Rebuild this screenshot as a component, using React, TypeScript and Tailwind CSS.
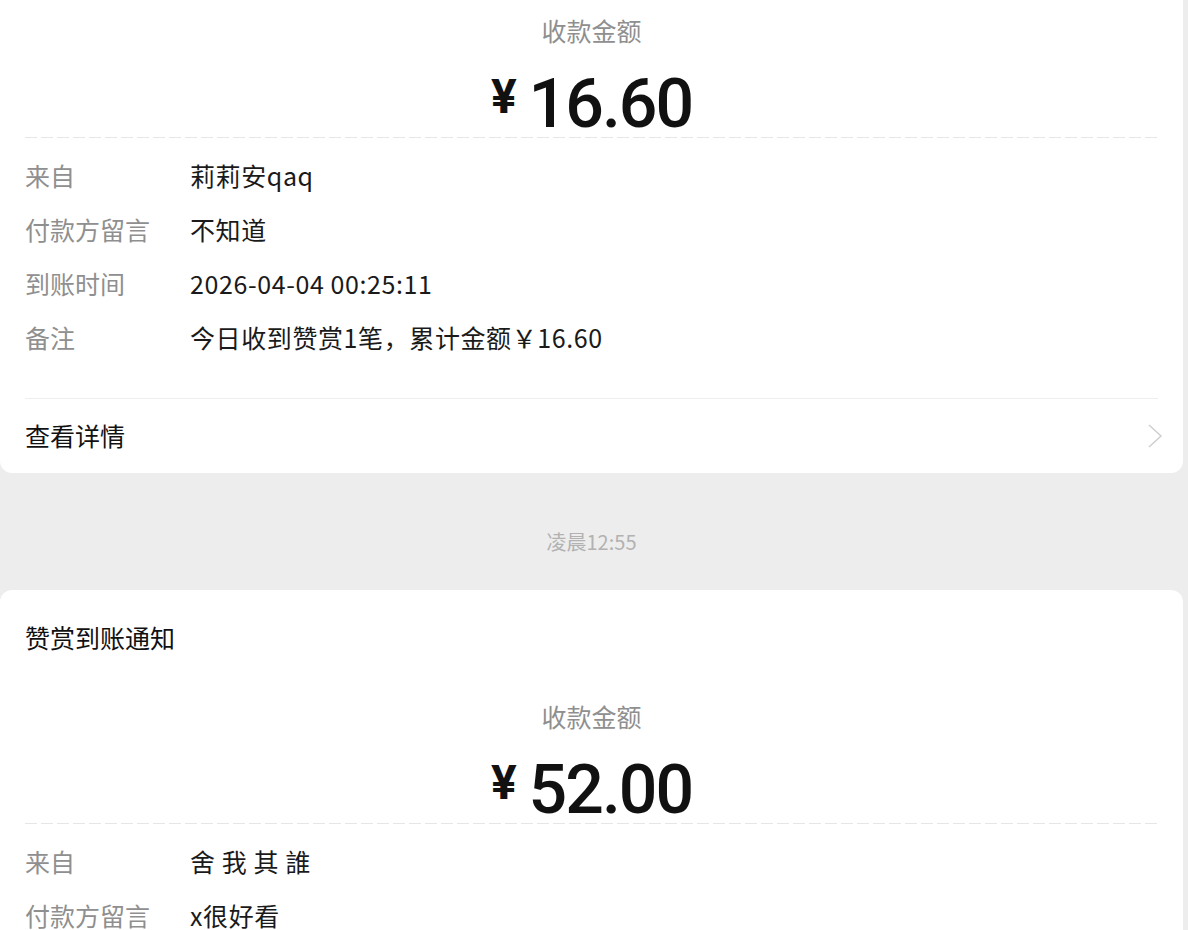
const cjk = "font-['Noto_Sans_CJK_SC',sans-serif]";

type Row = { label: string; value: string };

const DashedLine = () => (
  <div className="h-px w-full bg-[repeating-linear-gradient(90deg,#e6e6e6_0_12px,transparent_12px_16px)]" />
);

const Amount = ({ value }: { value: string }) => (
  <div className="mt-[24px] flex h-[67px] items-start justify-center">
    <span className="mt-[3px] mr-[12px] font-['Roboto',sans-serif] text-[48px] font-bold leading-[48px] text-[#111]">
      ¥
    </span>
    <span className="font-['Roboto',sans-serif] text-[68px] font-medium leading-[68px] tracking-[-2px] text-[#111]">
      {value}
    </span>
  </div>
);

const InfoRows = ({ rows }: { rows: Row[] }) => (
  <div className="mt-[11px]">
    {rows.map((r) => (
      <div key={r.label} className="flex h-[54px] items-center text-[25px]">
        <div className="w-[165px] shrink-0 text-[#8f8f8f]">{r.label}</div>
        <div className="tracking-[0.6px] text-[#1a1a1a]">{r.value}</div>
      </div>
    ))}
  </div>
);

const Chevron = () => (
  <svg width="16" height="24" viewBox="0 0 16 24" className="mr-[-5px]">
    <polyline points="2,1 14,12 2,23" fill="none" stroke="#cfcfcf" strokeWidth="1.5" />
  </svg>
);

export default function App() {
  return (
    <div className={`${cjk} h-[930px] w-[1188px] overflow-hidden bg-[#ededed]`}>
      {/* first notice, top part scrolled off screen */}
      <div className="w-[1183px] rounded-b-[12px] bg-white px-[25px]">
        <div className="pt-[14px] text-center text-[25px] leading-[32px] text-[#8f8f8f]">收款金额</div>
        <Amount value="16.60" />
        <DashedLine />
        <InfoRows
          rows={[
            { label: "来自", value: "莉莉安qaq" },
            { label: "付款方留言", value: "不知道" },
            { label: "到账时间", value: "2026-04-04 00:25:11" },
            { label: "备注", value: "今日收到赞赏1笔，累计金额￥16.60" },
          ]}
        />
        <div className="mt-[33px] h-px bg-[#eeeeee]" />
        <div className="flex h-[74px] items-center justify-between">
          <span className="text-[25px] text-[#111]">查看详情</span>
          <Chevron />
        </div>
      </div>

      <div className="h-[117px] w-[1183px] pt-[57px] text-center text-[20px] leading-[24px] text-[#b2b2b2]">
        凌晨12:55
      </div>

      {/* second notice */}
      <div className="w-[1183px] rounded-t-[12px] bg-white px-[25px] pt-[21px] pb-[40px]">
        <div className="flex h-[54px] items-center text-[25px] text-[#111]">赞赏到账通知</div>
        <div className="mt-[35px] text-center text-[25px] leading-[32px] text-[#8f8f8f]">收款金额</div>
        <Amount value="52.00" />
        <DashedLine />
        <InfoRows
          rows={[
            { label: "来自", value: "舍 我 其 誰" },
            { label: "付款方留言", value: "x很好看" },
          ]}
        />
      </div>
    </div>
  );
}
